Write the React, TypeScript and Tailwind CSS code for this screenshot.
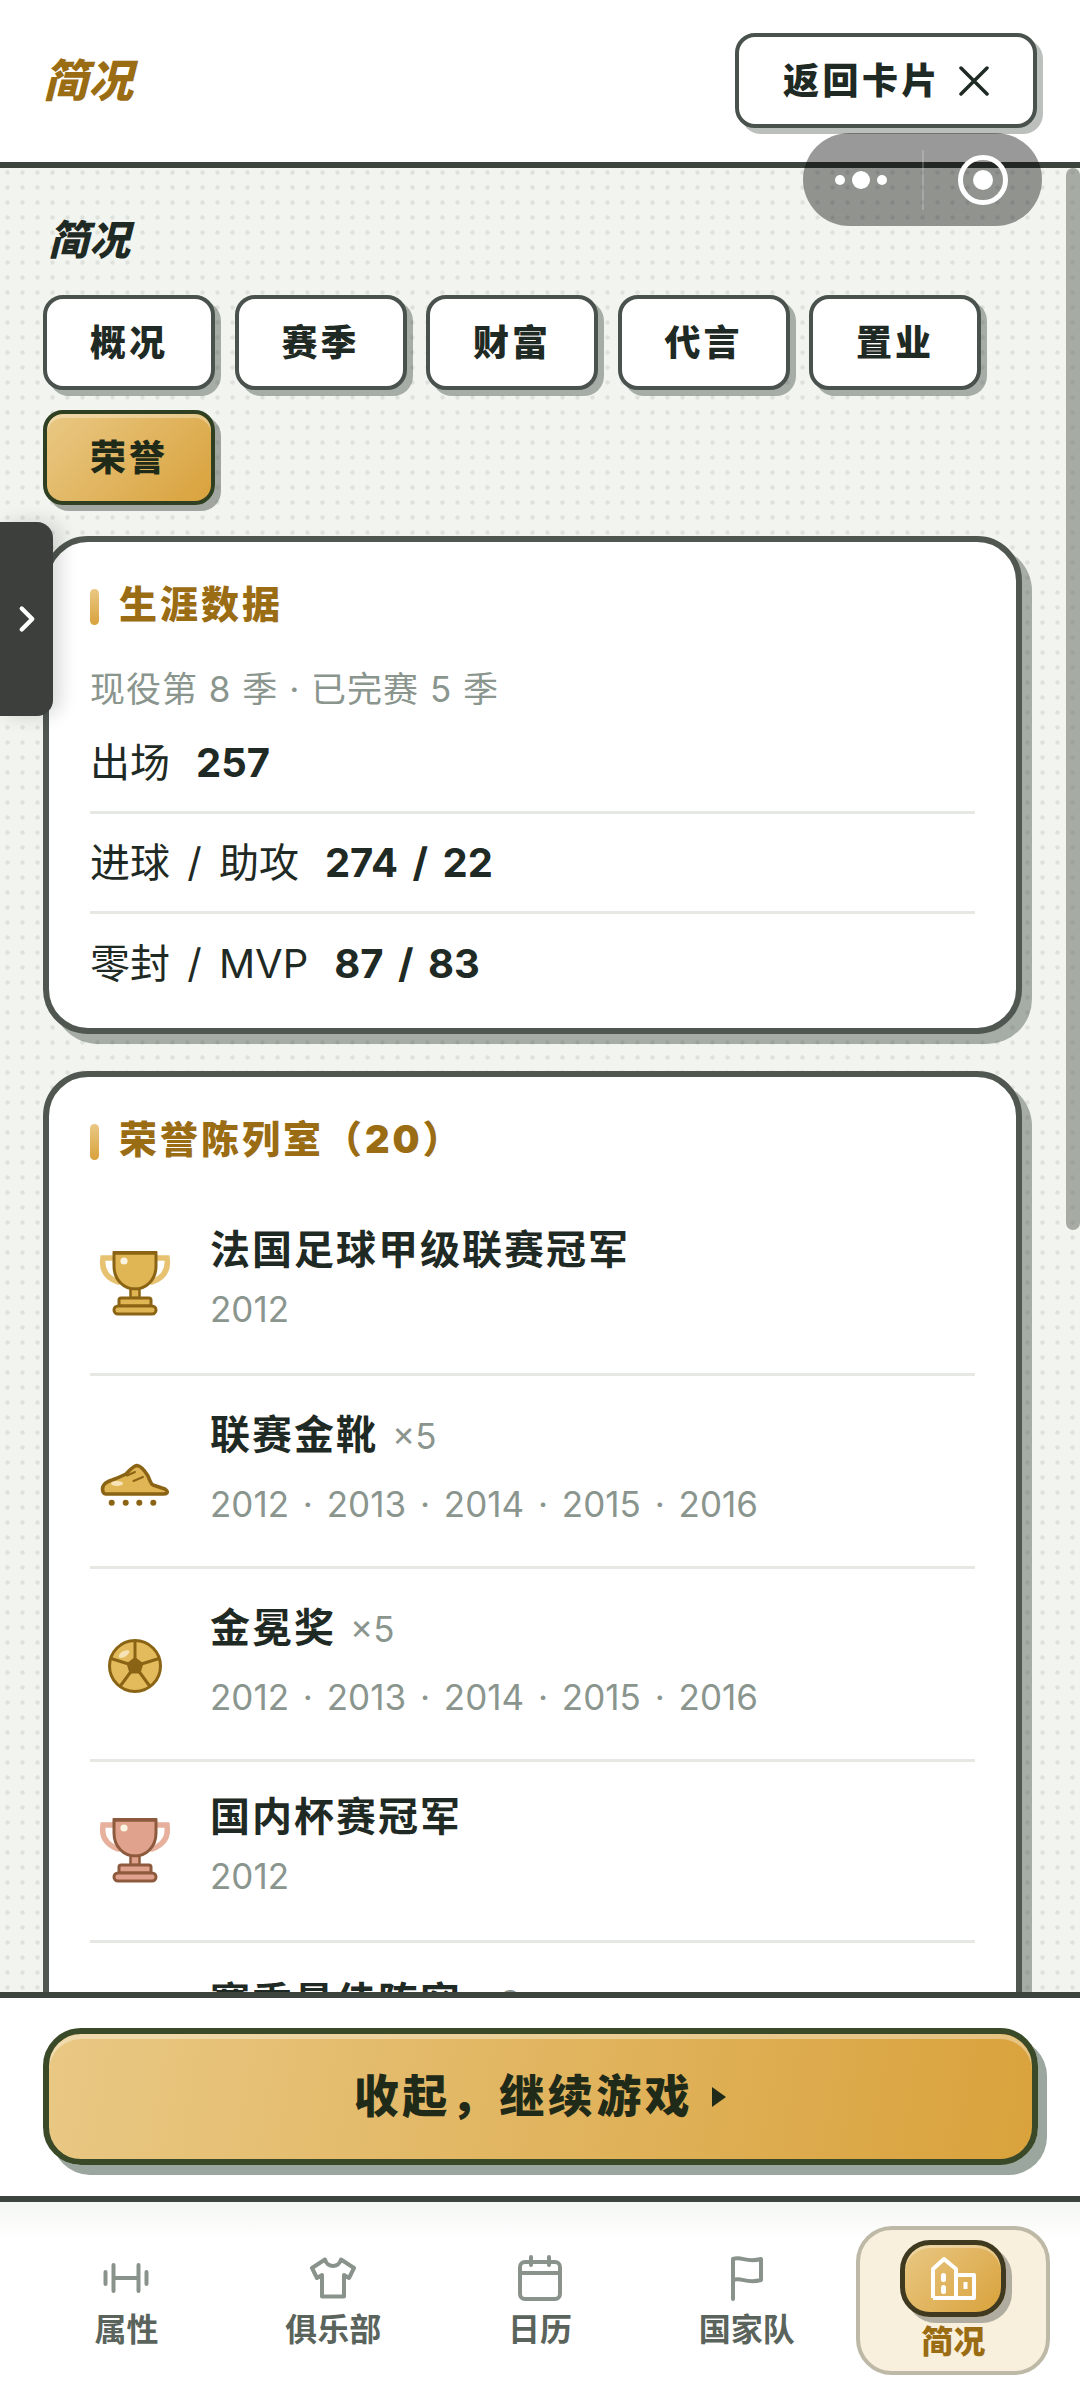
import React from 'react';
import { ChevronRight } from 'lucide-react';

const GoldTrophy: React.FC<{ fill: string; ink: string; handle: string }> = ({ fill, ink, handle }) => (
  <svg width="90" height="90" viewBox="0 0 90 90" fill="none">
    <path d="M24 20H13C11 33 17 40 28 44" stroke={handle} strokeWidth="5.5" strokeLinecap="round" />
    <path d="M66 20H77C79 33 73 40 62 44" stroke={handle} strokeWidth="5.5" strokeLinecap="round" />
    <path d="M24 15H66V28C66 42 56 51 45 51C34 51 24 42 24 28Z" fill={fill} stroke={ink} strokeWidth="3" />
    <rect x="23" y="13" width="44" height="3.5" fill={ink} />
    <rect x="40.5" y="51" width="9" height="9" fill={fill} stroke={ink} strokeWidth="2.5" />
    <rect x="29" y="60" width="32" height="8" rx="2" fill={fill} stroke={ink} strokeWidth="3" />
    <rect x="24" y="68" width="42" height="8" rx="4" fill={fill} stroke={ink} strokeWidth="3" />
    <circle cx="34" cy="23" r="3.6" fill="#fbf3e2" />
  </svg>
);

const Boot = () => (
  <svg width="90" height="90" viewBox="0 0 90 90" fill="none">
    <path
      d="M13 66C11 60 15 56 22 54C28 52 32 50 36 48C40 44 43 40 47 39.500C51 40 55 45 58 50C60 55 61 58 63 59L72 62C76 63 78 65 77 67C76 68 75 68 73 68H16C14 68 13.500 67 13 66Z"
      fill="#e0b553"
      stroke="#8a6414"
      strokeWidth="3.5"
      strokeLinejoin="round"
    />
    <ellipse cx="27" cy="57.500" rx="6" ry="2.500" fill="#f6e4b8" />
    <path d="M43.500 55L53 51M37 49.500L45 46" stroke="#8a6414" strokeWidth="2" strokeLinecap="round" />
    <circle cx="21.700" cy="76.700" r="3" fill="#8a6414" />
    <circle cx="35.700" cy="76.700" r="3" fill="#8a6414" />
    <circle cx="49.300" cy="76.700" r="3" fill="#8a6414" />
    <circle cx="63.300" cy="76.700" r="3" fill="#8a6414" />
  </svg>
);

const Ball = () => (
  <svg width="90" height="90" viewBox="0 0 90 90" fill="none">
    <circle cx="45" cy="47" r="25.500" fill="#e3bb5c" stroke="#8a6414" strokeWidth="3" />
    <path d="M45 47V22M45 47L69 39.500M45 47L60 67.500M45 47L30 67.500M45 47L21 39.500" stroke="#8a6414" strokeWidth="3" />
    <path d="M45 38L53.500 44.500L50.300 54.500H39.700L36.500 44.500Z" fill="#8a6414" />
    <ellipse cx="34" cy="35" rx="6" ry="2.800" fill="#f6e4b8" transform="rotate(-30 34 35)" />
  </svg>
);

const DumbbellIcon = () => (
  <svg width="46" height="32" viewBox="0 0 46 32" fill="none" stroke="#89938c" strokeWidth="4" strokeLinecap="round">
    <path d="M2.500 10V22M10.500 3V29M35.500 3V29M43.500 10V22M10.500 16H35.500" />
  </svg>
);

const ShirtIcon = () => (
  <svg width="48" height="42" viewBox="0 0 48 42" fill="none" stroke="#89938c" strokeWidth="4" strokeLinejoin="round">
    <path d="M16 2.500L3 11L8 21L13 18V39.500H35V18L40 21L45 11L32 2.500C30 11 18 11 16 2.500Z" />
  </svg>
);

const CalendarIcon = () => (
  <svg width="46" height="46" viewBox="0 0 46 46" fill="none" stroke="#89938c" strokeWidth="4" strokeLinecap="round">
    <rect x="3" y="7" width="40" height="37" rx="5" />
    <path d="M3 18H43M14 2V10M32 2V10" />
  </svg>
);

const FlagIcon = () => (
  <svg width="34" height="46" viewBox="0 0 34 46" fill="none" stroke="#89938c" strokeWidth="4" strokeLinecap="round" strokeLinejoin="round">
    <path d="M3 44V4C12 1 16 8 31 4V25C16 29 12 22 3 25" />
  </svg>
);

const BuildingIcon = () => (
  <svg width="48" height="46" viewBox="0 0 48 46" fill="none">
    <path d="M4 42V13L15 3L27 13V42M27 19H45V42H4" stroke="#fff" strokeWidth="4" strokeLinejoin="round" />
    <rect x="12" y="17" width="5" height="9" rx="2.500" fill="#fff" />
    <rect x="12" y="29" width="5" height="9" rx="2.500" fill="#fff" />
    <rect x="34.500" y="26" width="4" height="7" fill="#fff" />
  </svg>
);

const tabs = ['概况', '赛季', '财富', '代言', '置业', '荣誉'];

const honors = [
  { icon: <GoldTrophy fill="#e0b553" ink="#8a6414" handle="#e6c271" />, title: '法国足球甲级联赛冠军', years: '2012' },
  { icon: <Boot />, title: '联赛金靴', count: '×5', years: '2012 · 2013 · 2014 · 2015 · 2016' },
  { icon: <Ball />, title: '金冕奖', count: '×5', years: '2012 · 2013 · 2014 · 2015 · 2016' },
  { icon: <GoldTrophy fill="#e0a28c" ink="#8e5a3e" handle="#e6b09d" />, title: '国内杯赛冠军', years: '2012' },
  { icon: <GoldTrophy fill="#e0b553" ink="#8a6414" handle="#e6c271" />, title: '赛季最佳阵容', count: '×3', years: '2012 · 2013 · 2014' },
];

const stats = [
  { label: '出场', value: '257' },
  { label: '进球 / 助攻', value: '274 / 22' },
  { label: '零封 / MVP', value: '87 / 83' },
];

const navItems = [
  { label: '属性', icon: <DumbbellIcon /> },
  { label: '俱乐部', icon: <ShirtIcon /> },
  { label: '日历', icon: <CalendarIcon /> },
  { label: '国家队', icon: <FlagIcon /> },
];

const SectionTitle: React.FC<{ children: React.ReactNode }> = ({ children }) => (
  <div className="flex items-center gap-[20px] h-[37px]">
    <span className="w-[9px] h-[36px] rounded-full bg-[linear-gradient(180deg,#e9c884,#d9a23c)]" />
    <h3 className="mb-[6px] text-[38px] leading-none font-black tracking-[3px] text-[#9a6c14]">{children}</h3>
  </div>
);

const Card: React.FC<{ children: React.ReactNode }> = ({ children }) => (
  <section className="w-[979px] rounded-[45px] border-[6px] border-[#4f5750] bg-white pt-[46px] px-[41px] shadow-[10px_10px_0_rgba(63,74,64,0.42)]">
    {children}
  </section>
);

export default function App() {
  return (
    <div className="relative w-[1080px] h-[2400px] overflow-hidden flex flex-col bg-white text-[#1f2a24] font-['Inter','Noto_Sans_CJK_SC',sans-serif]">
      {/* top bar */}
      <header className="h-[168px] shrink-0 flex items-start justify-between pl-[43px] pr-[43px] pt-[33px] border-b-[6px] border-[#3c443d]">
        <h1 className="mt-[20px] text-[45px] leading-[56px] font-black italic text-[#9a6c14]">简况</h1>
        <button className="w-[302px] h-[95px] flex items-center justify-center gap-[18px] rounded-[20px] border-[4px] border-[#4a524d] bg-white text-[36px] font-black tracking-[3.5px] shadow-[6px_6px_0_rgba(63,74,64,0.35)]">
          返回卡片
          <svg width="30" height="30" viewBox="0 0 30 30" fill="none" stroke="#1f2a24" strokeWidth="3.5" strokeLinecap="round">
            <path d="M2 2L28 28M28 2L2 28" />
          </svg>
        </button>
      </header>

      {/* scrolling content */}
      <main className="flex-1 min-h-0 overflow-hidden px-[43px] pt-[50px] bg-[#f2f5ef] bg-[radial-gradient(circle,#dfe2dc_1.8px,transparent_2.6px)] bg-[size:15px_15px] bg-[position:0_-3px]">
        <h2 className="h-[44px] text-[41px] leading-[44px] font-black italic ml-[5px]">简况</h2>
        <div className="flex flex-wrap gap-x-[19.5px] gap-y-[20px] mt-[33px]">
          {tabs.map((tab) => (
            <div
              key={tab}
              className={
                tab === '荣誉'
                  ? 'w-[172px] h-[95px] flex items-center justify-center rounded-[20px] border-[4px] border-[#2f4022] bg-[linear-gradient(135deg,#e9c884,#d9a23c)] text-[36px] font-black tracking-[3px] text-[#1f2b18] shadow-[inset_0_4px_0_rgba(255,255,255,0.3),6px_6px_0_rgba(63,74,64,0.45)]'
                  : 'w-[172px] h-[95px] flex items-center justify-center rounded-[20px] border-[4px] border-[#4a524d] bg-white text-[36px] font-black tracking-[3px] shadow-[6px_6px_0_rgba(63,74,64,0.42)]'
              }
            >
              {tab}
            </div>
          ))}
        </div>

        <div className="flex flex-col gap-[37px] mt-[31px]">
          <Card>
            <SectionTitle>生涯数据</SectionTitle>
            <p className="mt-[39px] h-[50px] text-[35px] leading-[50px] tracking-[1px] text-[#8a958e]">现役第 8 季 · 已完赛 5 季</p>
            {stats.map((stat, i) => (
              <div
                key={stat.label}
                className={`h-[100px] flex items-center gap-[26px] border-[#e6e8e3] ${i < 2 ? 'border-b-[3px]' : ''}`}
              >
                <span className="text-[40px] [word-spacing:6px]">{stat.label}</span>
                <span className="text-[40px] font-bold [word-spacing:5px]">{stat.value}</span>
              </div>
            ))}
            <div className="h-[14px]" />
          </Card>

          <Card>
            <SectionTitle>荣誉陈列室（20）</SectionTitle>
            <div className="mt-[35px]">
              {honors.map((honor) => (
                <div
                  key={honor.title}
                  className={`flex items-center gap-[30px] border-b-[3px] border-[#e6e8e3] pt-[30px] ${honor.count ? 'pb-[37px]' : 'pb-[39px]'}`}
                >
                  <div className="w-[90px] h-[90px] shrink-0 mt-[7px]">{honor.icon}</div>
                  <div>
                    <div className={`flex items-center gap-[14px] ${honor.count ? 'h-[58px]' : 'h-[50px]'}`}>
                      <span className="text-[40px] leading-[50px] font-bold tracking-[2px]">{honor.title}</span>
                      {honor.count && <span className="mt-[3px] text-[35px] text-[#8a958e]">{honor.count}</span>}
                    </div>
                    <p className={`h-[50px] text-[35px] leading-[50px] [word-spacing:4px] text-[#8a958e] ${honor.count ? 'mt-[15px]' : 'mt-[9px]'}`}>{honor.years}</p>
                  </div>
                </div>
              ))}
            </div>
          </Card>
        </div>
      </main>

      {/* collapse button */}
      <footer className="h-[210px] shrink-0 border-t-[6px] border-b-[6px] border-[#3c443d] bg-white pt-[30px] px-[43px]">
        <button className="w-[995px] h-[137px] flex items-center justify-center gap-[18px] rounded-[38px] border-[6px] border-[#3a4a28] bg-[linear-gradient(100deg,#e9c884,#d9a23c)] text-[45px] font-black tracking-[3.5px] text-[#1f2b18] shadow-[inset_0_5px_0_rgba(255,255,255,0.35),9px_10px_0_#9aa69e]">
          收起，继续游戏
          <svg width="16" height="22" viewBox="0 0 16 22">
            <path d="M1 1L15 11L1 21Z" fill="#1f2b18" />
          </svg>
        </button>
      </footer>

      {/* bottom nav */}
      <nav className="h-[198px] shrink-0 grid grid-cols-5 gap-[14px] px-[30px] pt-[24px] bg-[linear-gradient(180deg,#f5f7f4,#ffffff_40px)]">
        {navItems.map((item) => (
          <div key={item.label} className="h-[149px] flex flex-col items-center">
            <div className="h-[64px] mt-[20px] flex items-center justify-center">{item.icon}</div>
            <span className="text-[32px] leading-[40px] font-semibold text-[#5a645c]">{item.label}</span>
          </div>
        ))}
        <div className="-ml-[1px] w-[194px] h-[149px] flex flex-col items-center rounded-[36px] border-[4px] border-[#bdb9a6] bg-[#f8efdc] pt-[10px]">
          <div className="w-[106px] h-[77px] flex items-center justify-center rounded-[30px] border-[5px] border-[#3f3a1f] bg-[linear-gradient(135deg,#e9c884,#d9a23c)] shadow-[inset_0_3px_0_rgba(255,255,255,0.3),6px_6px_0_#b0ada0]">
            <BuildingIcon />
          </div>
          <span className="mt-[5px] text-[32px] leading-[40px] font-black text-[#9a6c14]">简况</span>
        </div>
      </nav>

      {/* overlays */}
      <div className="absolute left-[803px] top-[133px] w-[239px] h-[93px] rounded-full bg-black/40 flex items-center">
        <div className="w-[116px] flex items-center justify-center gap-[7px]">
          <span className="w-[10px] h-[10px] rounded-full bg-white" />
          <span className="w-[18px] h-[18px] rounded-full bg-white" />
          <span className="w-[10px] h-[10px] rounded-full bg-white" />
        </div>
        <span className="ml-[3px] w-[2px] h-[60px] bg-white/20" />
        <div className="flex-1 flex items-center justify-center">
          <span className="w-[50px] h-[50px] rounded-full border-[5px] border-white flex items-center justify-center">
            <span className="w-[20px] h-[20px] rounded-full bg-white" />
          </span>
        </div>
      </div>
      <div className="absolute right-0 top-[168px] w-[14px] h-[1062px] rounded-full bg-[#5a645a]/50" />
      <div className="absolute left-0 top-[522px] w-[53px] h-[194px] rounded-r-[16px] bg-[#3c3f3c] flex items-center justify-center text-white shadow-[8px_0_18px_rgba(0,0,0,0.14)]">
        <ChevronRight size={42} strokeWidth={2.5} />
      </div>
    </div>
  );
}
